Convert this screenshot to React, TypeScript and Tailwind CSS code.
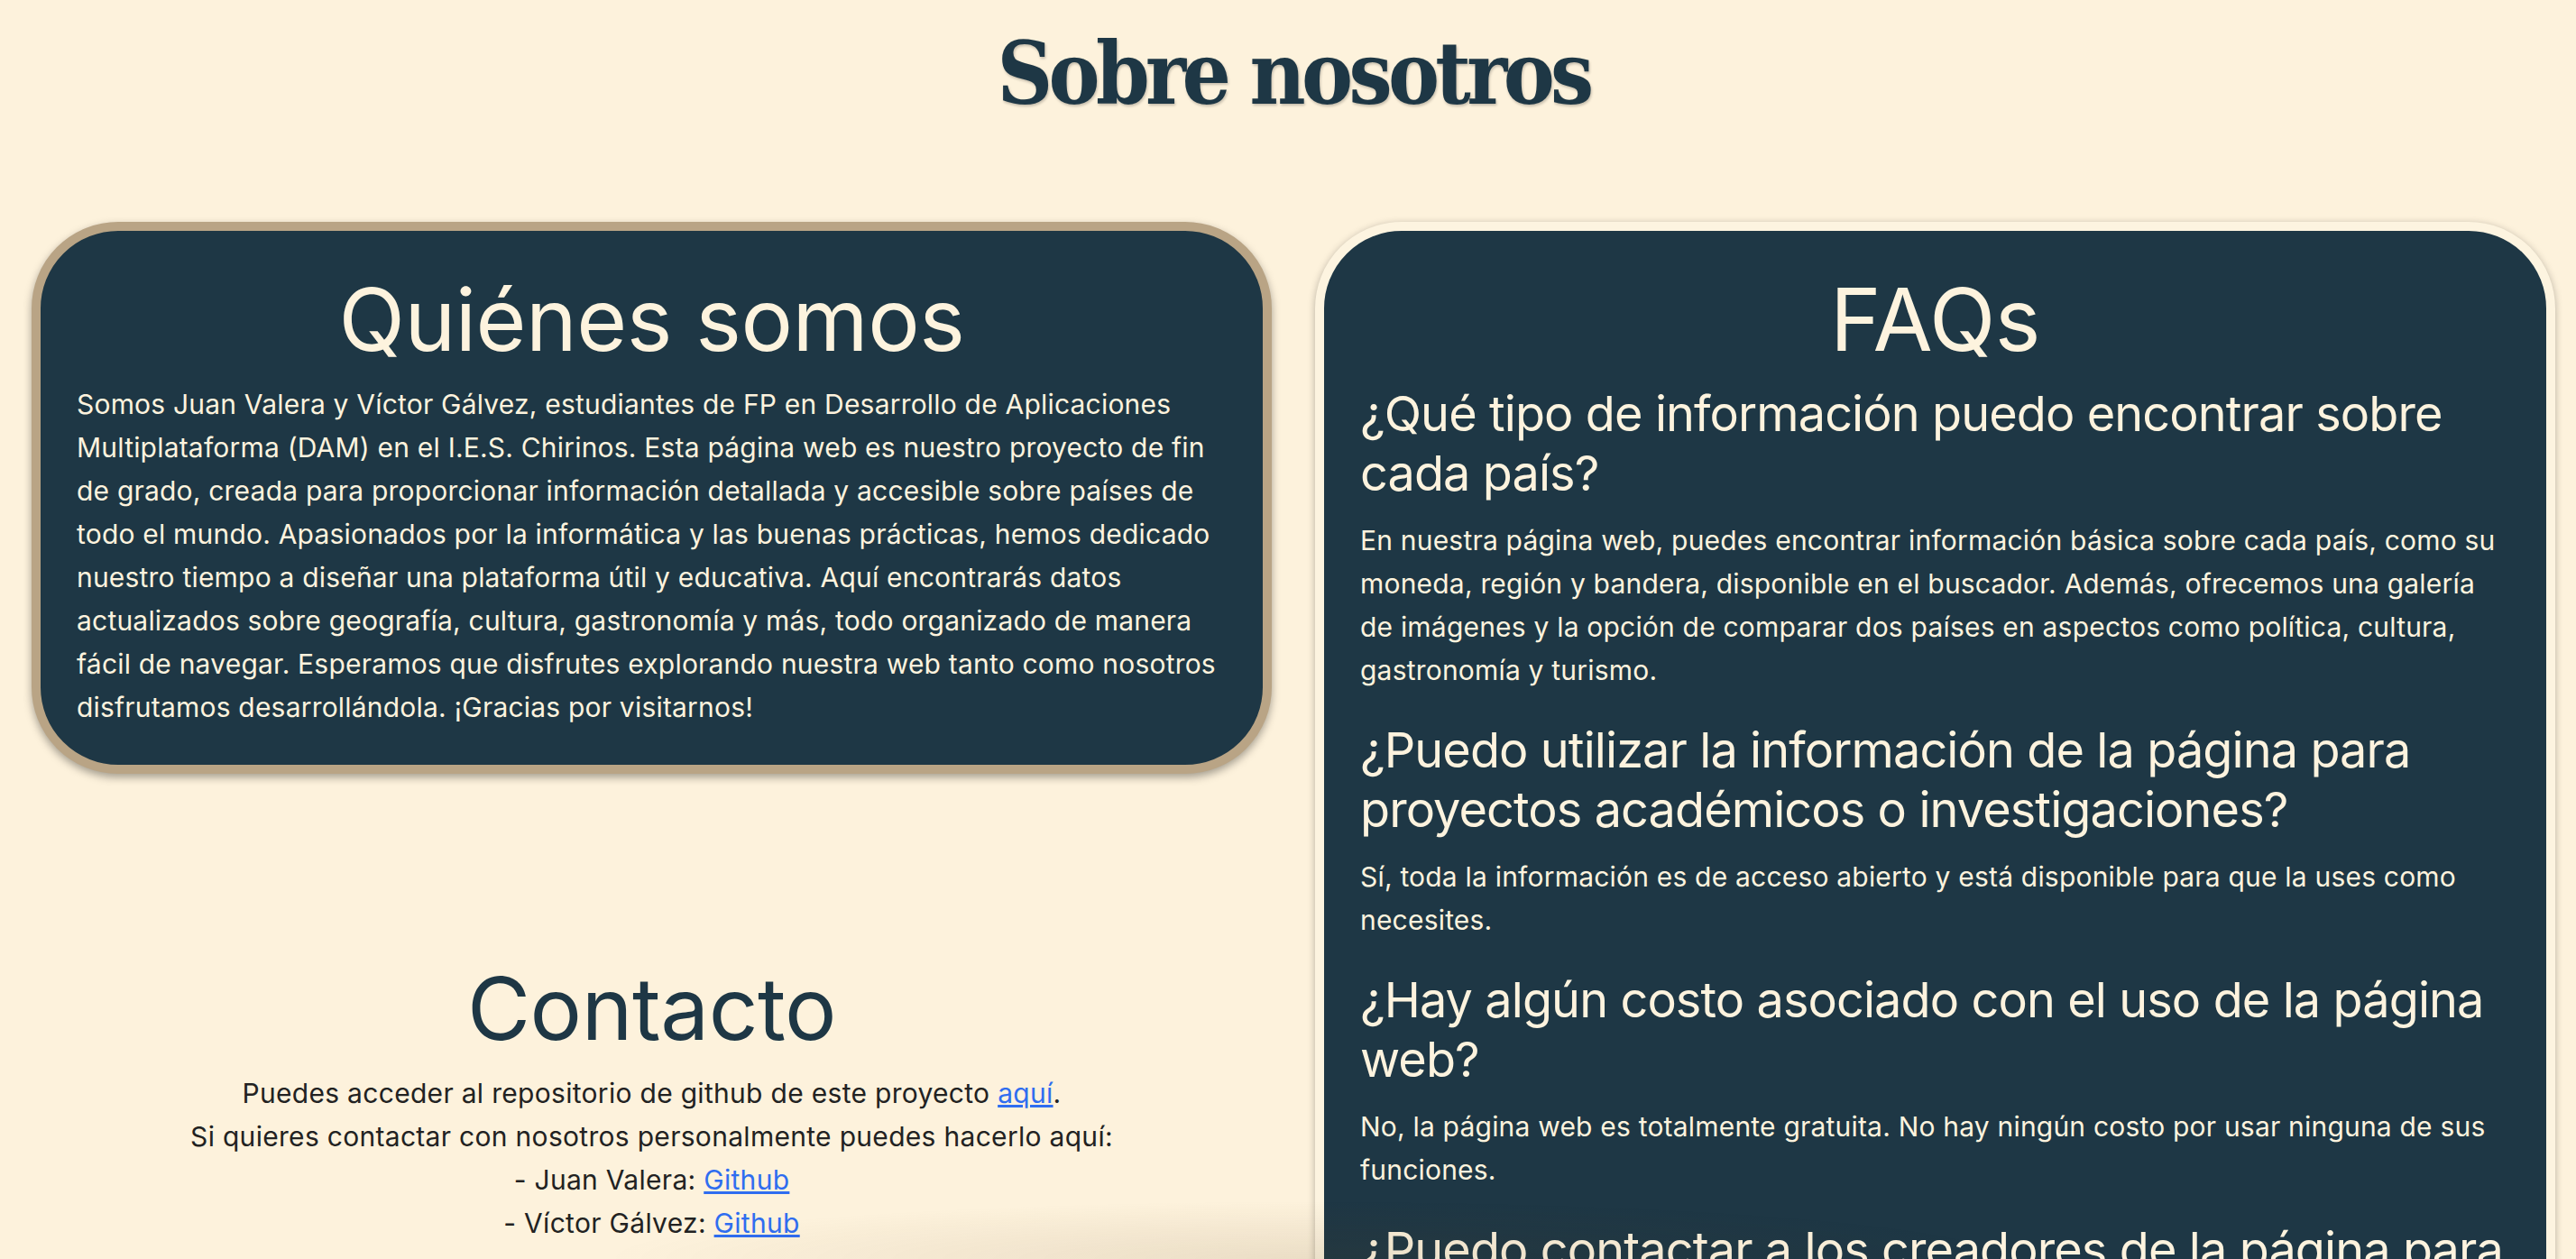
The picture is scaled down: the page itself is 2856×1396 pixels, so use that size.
const faqs = [
  {
    q: "¿Qué tipo de información puedo encontrar sobre cada país?",
    a: "En nuestra página web, puedes encontrar información básica sobre cada país, como su moneda, región y bandera, disponible en el buscador. Además, ofrecemos una galería de imágenes y la opción de comparar dos países en aspectos como política, cultura, gastronomía y turismo.",
  },
  {
    q: "¿Puedo utilizar la información de la página para proyectos académicos o investigaciones?",
    a: "Sí, toda la información es de acceso abierto y está disponible para que la uses como necesites.",
  },
  {
    q: "¿Hay algún costo asociado con el uso de la página web?",
    a: "No, la página web es totalmente gratuita. No hay ningún costo por usar ninguna de sus funciones.",
  },
  {
    q: "¿Puedo contactar a los creadores de la página para sugerencias o colaboraciones?",
    a: "Sí, puedes contactarnos a través de nuestros perfiles de GitHub, que encontrarás en la sección de contacto.",
  },
];

export default function App() {
  return (
    <main className="min-h-screen bg-[#fdf2dc] pt-[34px] pb-[60px] font-['Inter','Noto_Sans',sans-serif]">
      <h1 className="mb-[117px] pl-[35px] pr-[23px] text-center font-['DejaVu_Serif_Condensed','DejaVu_Serif',serif] text-[95px] font-bold leading-[95px] tracking-[-4.6px] text-[#1e3745] [text-shadow:1px_2px_3px_rgba(0,0,0,0.22)]">
        Sobre nosotros
      </h1>

      <div className="grid grid-cols-2 items-start gap-[48px] pl-[35px] pr-[23px]">
        <div className="flex flex-col">
          <section className="rounded-[96px] border-[10px] border-[#b9a485] bg-[#1e3745] p-[40px] text-[#fdf3de] shadow-[0_4px_10px_rgba(0,0,0,0.35)]">
            <h2 className="mb-[12px] text-center text-[96px] font-normal leading-[1.21] tracking-[-0.5px]">
              Quiénes somos
            </h2>
            <p className="text-[30px] leading-[48px] tracking-[0.2px]">
              Somos Juan Valera y Víctor Gálvez, estudiantes de FP en Desarrollo de Aplicaciones
              Multiplataforma (DAM) en el I.E.S. Chirinos. Esta página web es nuestro proyecto de fin
              de grado, creada para proporcionar información detallada y accesible sobre países de
              todo el mundo. Apasionados por la informática y las buenas prácticas, hemos dedicado
              nuestro tiempo a diseñar una plataforma útil y educativa. Aquí encontrarás datos
              actualizados sobre geografía, cultura, gastronomía y más, todo organizado de manera
              fácil de navegar. Esperamos que disfrutes explorando nuestra web tanto como nosotros
              disfrutamos desarrollándola. ¡Gracias por visitarnos!
            </p>
          </section>

          <section className="mt-[202px] text-center text-[30px] leading-[48px] tracking-[0.3px] text-[#222222]">
            <h2 className="mb-[12px] text-[96px] font-normal leading-[1.21] tracking-[-0.5px] text-[#1e3745]">
              Contacto
            </h2>
            <p>
              Puedes acceder al repositorio de github de este proyecto{" "}
              <a href="#" className="text-[#2f6df0] underline">
                aquí
              </a>
              .
            </p>
            <p>Si quieres contactar con nosotros personalmente puedes hacerlo aquí:</p>
            <p>
              - Juan Valera:{" "}
              <a href="#" className="text-[#2f6df0] underline">
                Github
              </a>
            </p>
            <p>
              - Víctor Gálvez:{" "}
              <a href="#" className="text-[#2f6df0] underline">
                Github
              </a>
            </p>
          </section>
        </div>

        <section className="rounded-[96px] border-[10px] border-[#fdf4e0] bg-[#1e3745] px-[40px] pt-[40px] pb-[70px] text-[#fdf3de] shadow-[0_2px_8px_rgba(0,0,0,0.28)]">
          <h2 className="mb-[14px] text-center text-[96px] font-normal leading-[1.21] tracking-[-0.5px]">
            FAQs
          </h2>
          {faqs.map((f) => (
            <div key={f.q} className="mb-[32px]">
              <h3 className="mb-[17px] text-[54px] font-normal leading-[66px] tracking-[-0.9px]">
                {f.q}
              </h3>
              <p className="text-[30px] leading-[48px] tracking-[0.2px]">{f.a}</p>
            </div>
          ))}
        </section>
      </div>

      <div className="pointer-events-none fixed bottom-0 left-[600px] h-[70px] w-[1700px] bg-[radial-gradient(ellipse_at_bottom,rgba(90,60,20,0.11),transparent_65%)]" />
    </main>
  );
}
